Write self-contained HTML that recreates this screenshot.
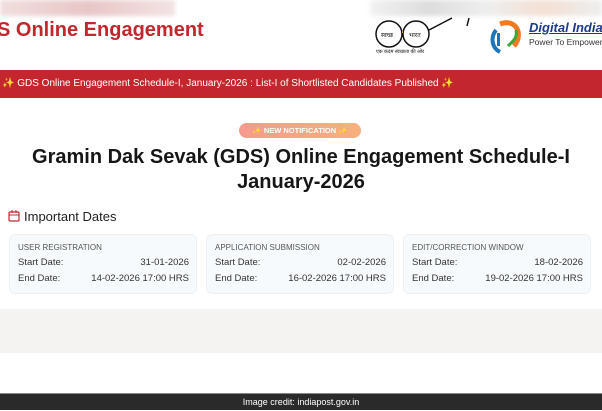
<!DOCTYPE html>
<html><head><meta charset="utf-8"><style>
*{margin:0;padding:0;box-sizing:border-box}
body{width:602px;height:410px;overflow:hidden;background:#fff;font-family:"Liberation Sans","Noto Sans CJK SC",sans-serif;position:relative}
.abs{position:absolute;white-space:nowrap}
.blur{left:0;top:0;width:175px;height:16px;background:linear-gradient(90deg,#f1dede,#e8c6c6,#f3e3e3);filter:blur(2px)}
.blur2{left:370px;top:0;width:232px;height:16px;background:linear-gradient(90deg,#f2f2f2,#ddd,#eee,#f4e0d4,#eee);filter:blur(2px)}
.title{left:-3px;top:19px;font-size:20px;font-weight:bold;color:#c1272d}
.bar{left:0;top:70px;width:602px;height:28px;background:#c3262c;color:#fff;font-size:10px;line-height:28px;padding-left:2px}
.pill{left:239px;top:123px;width:122px;height:15px;border-radius:8px;background:linear-gradient(90deg,#f59a8e,#f7b07c);color:#fff;font-size:7.5px;font-weight:bold;text-align:center;line-height:15px}
.h1{left:0;top:145px;width:602px;text-align:center;font-size:20px;font-weight:bold;color:#161616;line-height:25px}
.imp{left:24px;top:209px;font-size:13px;color:#222}
.card{top:234px;width:188px;height:60px;border-radius:6px;background:#f7fafc;border:1px solid #edf1f4;font-size:9.5px;color:#333;padding:8px 7px 0 8px}
.card .t{font-size:8px;color:#555;margin-bottom:5px}
.card .r{display:flex;justify-content:space-between;height:16px}
.gray{left:0;top:309px;width:602px;height:44px;background:#f4f3f2}
.foot{left:0;top:393px;width:602px;height:17px;background:#2a2a2a;color:#fff;font-size:9px;text-align:center;line-height:17px;border-top:1px solid #888}
</style></head><body>
<div class="abs blur"></div><div class="abs blur2"></div>
<div class="abs title">S Online Engagement</div>
<svg class="abs" style="left:374px;top:16px" width="110" height="40">
<circle cx="15" cy="18" r="13" fill="none" stroke="#111" stroke-width="1.5"/>
<circle cx="42" cy="18" r="13" fill="none" stroke="#111" stroke-width="1.5"/>
<line x1="28" y1="16" x2="29" y2="16" stroke="#f90" stroke-width="2"/>
<line x1="55" y1="14" x2="78" y2="2" stroke="#111" stroke-width="1.5"/>
<line x1="95" y1="2" x2="93" y2="10" stroke="#111" stroke-width="1.5"/>
<text x="7" y="21" font-size="6" fill="#111">स्वच्छ</text><text x="35" y="21" font-size="6" fill="#111">भारत</text>
<text x="2" y="37" font-size="5" fill="#111">एक कदम स्वच्छता की ओर</text>
</svg>
<svg class="abs" style="left:486px;top:16px" width="40" height="40">
<path d="M14 8 C30 2 38 18 28 30" fill="none" stroke="#f47920" stroke-width="5"/>
<path d="M10 14 C4 22 6 32 14 36" fill="none" stroke="#1b75bb" stroke-width="4"/>
<path d="M22 30 C26 26 32 22 30 14" fill="none" stroke="#3aa935" stroke-width="3"/>
<rect x="11" y="17" width="3" height="13" fill="#1b75bb"/>
</svg>
<div class="abs" style="left:529px;top:20px;font-size:13px;font-weight:bold;font-style:italic;color:#1b3a8c;text-decoration:underline">Digital India</div>
<div class="abs" style="left:529px;top:37px;font-size:8.5px;color:#333">Power To Empower</div>
<div class="abs bar">✨ GDS Online Engagement Schedule-I, January-2026 : List-I of Shortlisted Candidates Published ✨</div>
<div class="abs pill">✨ NEW NOTIFICATION ✨</div>
<div class="abs h1">Gramin Dak Sevak (GDS) Online Engagement Schedule-I<br>January-2026</div>
<svg class="abs" style="left:8px;top:210px" width="12" height="12"><rect x="1" y="2" width="10" height="9" rx="1" fill="none" stroke="#c1272d" stroke-width="1.2"/><line x1="1" y1="5" x2="11" y2="5" stroke="#c1272d"/><line x1="4" y1="0" x2="4" y2="3" stroke="#c1272d"/><line x1="8" y1="0" x2="8" y2="3" stroke="#c1272d"/></svg>
<div class="abs imp">Important Dates</div>
<div class="abs card" style="left:9px"><div class="t">USER REGISTRATION</div><div class="r"><span>Start Date:</span><span>31-01-2026</span></div><div class="r"><span>End Date:</span><span>14-02-2026 17:00 HRS</span></div></div>
<div class="abs card" style="left:206px"><div class="t">APPLICATION SUBMISSION</div><div class="r"><span>Start Date:</span><span>02-02-2026</span></div><div class="r"><span>End Date:</span><span>16-02-2026 17:00 HRS</span></div></div>
<div class="abs card" style="left:403px"><div class="t">EDIT/CORRECTION WINDOW</div><div class="r"><span>Start Date:</span><span>18-02-2026</span></div><div class="r"><span>End Date:</span><span>19-02-2026 17:00 HRS</span></div></div>
<div class="abs gray"></div>
<div class="abs foot">Image credit: indiapost.gov.in</div>
</body></html>
